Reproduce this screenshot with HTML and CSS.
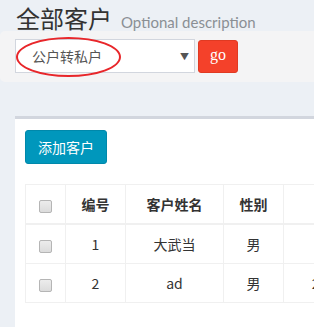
FILE: index.html
```html
<!DOCTYPE html>
<html><head>
<meta charset="utf-8"><title>全部客户</title>
<link rel="stylesheet" href="styles.css">
</head>
<body>
<div class="wrapper">
<div class="content-header">
<h1>全部客户<small>Optional description</small></h1>
</div>
<div class="filter-bar">
<div class="select-wrap">
<span class="select-text">公户转私户</span>
<span class="caret">&#9660;</span>
<span class="mark"></span>
</div>
<button class="btn-go">go</button>
</div>
<div class="box">
<button class="btn-add">添加客户</button>
<table class="list">
<thead>
<tr><th class="c-check"><span class="chk"></span></th><th class="c-no">编号</th><th class="c-name">客户姓名</th><th class="c-sex">性别</th><th class="c-tel">电话</th></tr>
</thead>
<tbody>
<tr><td><span class="chk"></span></td><td>1</td><td>大武当</td><td>男</td><td>13812345</td></tr>
<tr><td><span class="chk"></span></td><td>2</td><td>ad</td><td>男</td><td>2234567890</td></tr>
</tbody>
</table>
</div>
</div>
</body></html>
```

FILE: styles.css
```css
html, body {
margin: 0;
padding: 0;
overflow: hidden;
}
body {
background-color: #ecf0f5;
font-family: "Lato", "Noto Sans CJK SC", sans-serif;
color: #333;
}
.wrapper {
width: 600px;
}
.content-header {
padding: 4px 16px 0;
height: 27px;
}
.content-header h1 {
margin: 0;
font-family: "Noto Sans CJK SC", sans-serif;
font-size: 24px;
font-weight: normal;
line-height: 27px;
color: #333;
}
.content-header small {
font-family: "Lato", sans-serif;
font-size: 15px;
color: #8a8f94;
padding-left: 9px;
}
.filter-bar {
display: flex;
align-items: flex-start;
gap: 3px;
background-color: #f4f4f5;
border-radius: 5px;
padding: 8px 15px 9px;
height: 34px;
}
.select-wrap {
position: relative;
box-sizing: border-box;
width: 180px;
height: 34px;
background: #fff;
border: 1px solid #d2d6de;
display: flex;
align-items: center;
justify-content: space-between;
padding: 0 5px 0 16px;
}
.select-text {
font-family: "Noto Sans CJK SC", sans-serif;
font-size: 14px;
color: #555;
}
.caret {
font-size: 9px;
color: #555;
}
.mark {
position: absolute;
left: 0;
top: -3px;
width: 101px;
height: 36px;
border: 2px solid #e8262a;
border-radius: 50%;
}
.btn-go {
box-sizing: border-box;
width: 40px;
height: 33px;
margin-top: 1px;
background-color: #f4412a;
border: 1px solid #e03a22;
border-radius: 3px;
color: #fff;
font-family: "Liberation Serif", serif;
font-size: 16px;
padding: 0 0 4px;
}
.box {
margin: 34px 0 0 15px;
background: #fff;
border-top: 3px solid #d2d6de;
padding: 11px 10px 30px;
}
.btn-add {
display: block;
box-sizing: border-box;
width: 82px;
height: 34px;
background-color: #0097bc;
border: 1px solid #0088aa;
border-radius: 3px;
color: #fff;
font-family: "Noto Sans CJK SC", sans-serif;
font-size: 14px;
padding: 0;
}
.list {
margin-top: 20px;
border-collapse: collapse;
border: 1px solid #f0f0f0;
font-size: 14px;
}
.list th, .list td {
border: 1px solid #f0f0f0;
text-align: center;
padding: 0;
height: 38px;
}
.list th {
font-family: "Noto Sans CJK SC", sans-serif;
font-weight: bold;
font-size: 14px;
height: 38px;
border-bottom-width: 2px;
}
.list td {
font-family: "Noto Sans CJK SC", sans-serif;
}
.c-check { width: 39px; }
.c-no { width: 59px; }
.c-name { width: 97px; }
.c-sex { width: 59px; }
.c-tel { width: 133px; }
.chk {
display: inline-block;
box-sizing: border-box;
width: 13px;
height: 13px;
border: 1px solid #b5b5b5;
border-radius: 2px;
background: linear-gradient(#ececec, #dcdcdc);
vertical-align: middle;
}
```
